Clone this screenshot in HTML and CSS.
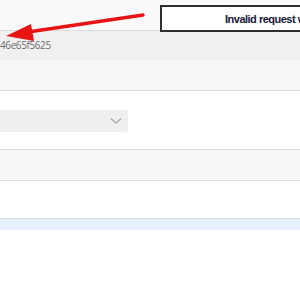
FILE: index.html
```html
<!DOCTYPE html>
<html lang="en">
<head>
  <meta charset="UTF-8" />
  <title>Request details</title>
  <link rel="stylesheet" href="styles.css">
</head>
<body>
  <header class="topbar">
    <div class="callout">Invalid request w</div>
    <svg class="arrow" width="150" height="45" viewBox="0 0 150 45">
      <line x1="143" y1="15" x2="28" y2="32" stroke="#e81414" stroke-width="3.5" stroke-linecap="round"/>
      <polygon points="6,36 31,24 34,41" fill="#e81414"/>
    </svg>
  </header>

  <div class="id-row">46e65f5625</div>

  <section class="panel">
    <div class="panel-head"></div>
    <div class="panel-body">
      <div class="select">
        <svg class="chevron" width="12" height="8" viewBox="0 0 12 8">
          <polyline points="1,1.5 6,6 11,1.5" fill="none" stroke="#aaa" stroke-width="1.6"/>
        </svg>
      </div>
    </div>
  </section>

  <section class="panel">
    <div class="panel-head"></div>
    <div class="panel-body short"></div>
  </section>

  <div class="highlight"></div>
</body>
</html>
```

FILE: styles.css
```css
body {
  font-family: "Open Sans", "Liberation Sans", sans-serif;
  margin: 0;
  background-color: white;
  width: 300px;
  height: 300px;
  overflow: hidden;
}
.topbar {
  position: relative;
  height: 30px;
  background-color: #fafafa;
  border-bottom: 1px solid #dadada;
}
.callout {
  position: absolute;
  left: 160px;
  top: 5px;
  width: 80px;
  height: 23px;
  border: 2px solid #2e2e2e;
  border-right: none;
  background: white;
  color: #16163a;
  font-family: "Liberation Sans", Arial, sans-serif;
  font-weight: bold;
  font-size: 11px;
  letter-spacing: -0.5px;
  line-height: 24px;
  padding-left: 63px;
  white-space: nowrap;
  overflow: hidden;
  box-sizing: content-box;
}
.arrow {
  position: absolute;
  left: 0;
  top: 0;
}
.id-row {
  height: 29px;
  background-color: #f0f0f0;
  color: #6d6d6d;
  font-size: 10px;
  letter-spacing: -0.4px;
  line-height: 28px;
}
.panel-head {
  height: 30px;
  background-color: #f7f7f7;
  border-bottom: 1px solid #dcdcdc;
  box-shadow: 0 1px 0 #eeeeee;
}
.panel-body {
  height: 59px;
  background: white;
  border-bottom: 1px solid #dcdcdc;
  box-shadow: 0 1px 0 #eeeeee;
  padding-top: 19px;
  box-sizing: border-box;
}
.panel-body.short {
  height: 38px;
  padding-top: 0;
}
.select {
  width: 128px;
  height: 22px;
  background-color: #efefef;
  border-radius: 0 3px 3px 0;
  display: flex;
  justify-content: flex-end;
  align-items: center;
  padding-right: 6px;
  box-sizing: border-box;
}
.highlight {
  height: 11px;
  background-color: #e7f1fd;
}
```
